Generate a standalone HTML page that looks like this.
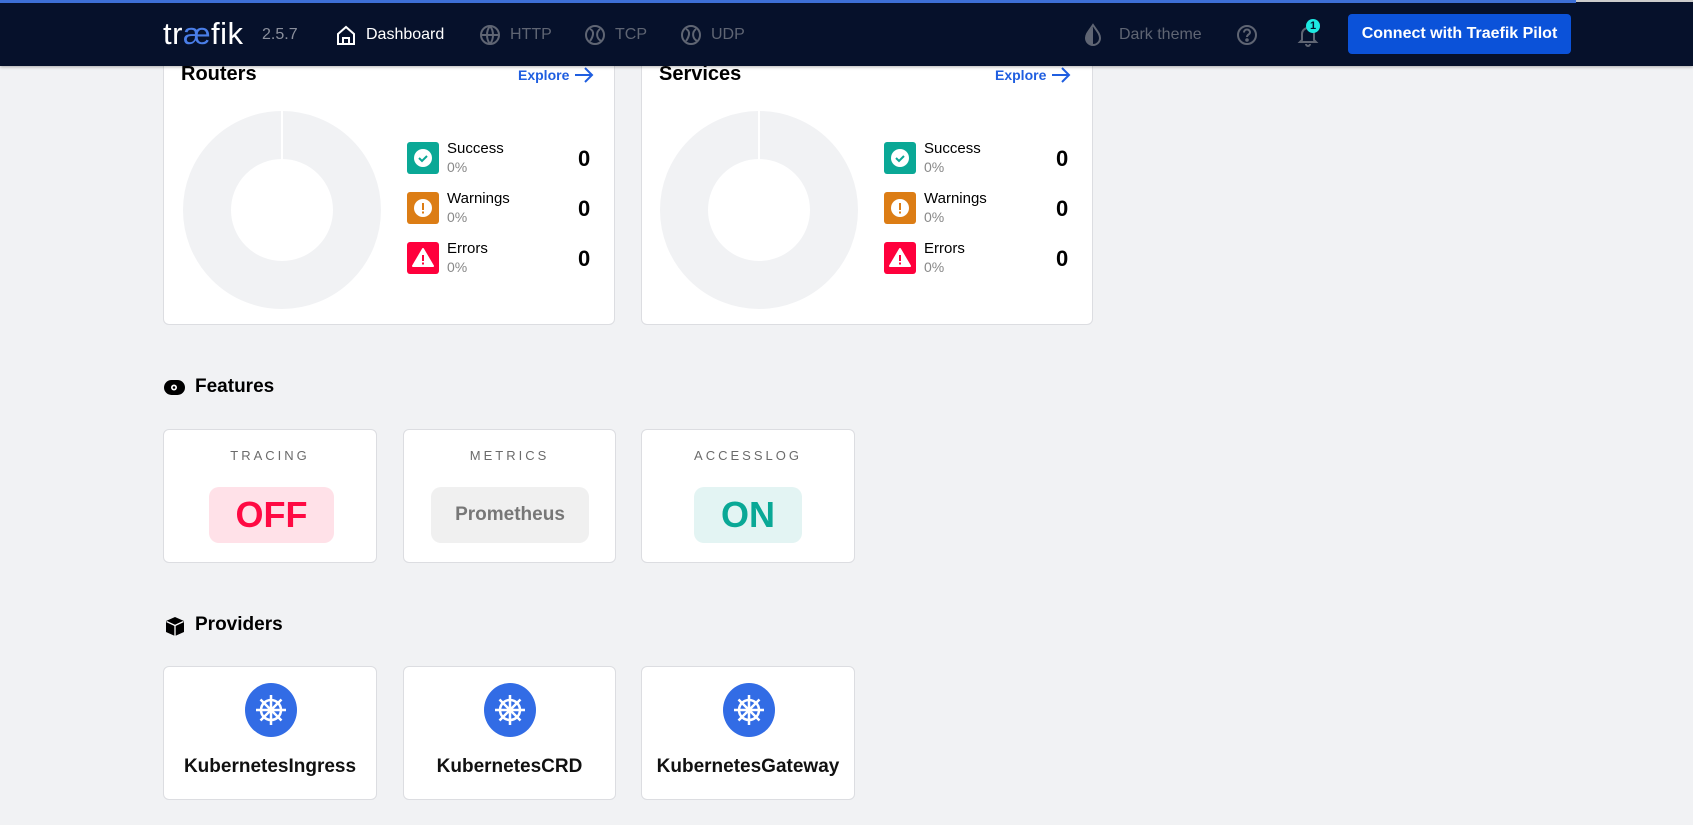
<!DOCTYPE html>
<html><head><meta charset="utf-8"><style>
*{box-sizing:border-box;margin:0;padding:0}
body{width:1693px;height:825px;overflow:hidden;background:#f1f2f4;font-family:"Liberation Sans",sans-serif;position:relative;color:#000}
.nav{position:absolute;left:0;top:0;width:1693px;height:66px;background:#06112b;box-shadow:0 1px 3px rgba(0,0,0,.3);z-index:5}
.topline{position:absolute;left:0;top:0;width:1576px;height:3px;background:#3d6fd6}
.topline2{position:absolute;left:1576px;top:0;width:117px;height:2px;background:#ccc}
.abs{position:absolute}
.navt{position:absolute;top:26px;font-size:16px;color:#5f6573}
.card{position:absolute;background:#fff;border:1px solid #dcdde1;border-radius:6px}
.title{position:absolute;font-size:20px;font-weight:bold}
.explore{position:absolute;font-size:14px;font-weight:bold;color:#1f5ee0}
.lg{position:absolute;width:32px;height:32px;border-radius:3px}
.lbl{position:absolute;font-size:15px}
.pct{position:absolute;font-size:14px;color:#888}
.cnt{position:absolute;font-size:22px;font-weight:bold}
.ft{position:absolute;left:0;width:100%;text-align:center;top:18px;font-size:13px;letter-spacing:3px;color:#6b6b6b}
.badge{position:absolute;top:57px;height:56px;border-radius:10px;text-align:center;line-height:56px}
.pname{position:absolute;left:0;width:100%;text-align:center;top:89px;font-size:19px;font-weight:bold;color:#111}
.h{position:absolute;font-size:19px;font-weight:bold}
</style></head><body>
<div class="nav">
<div class="topline"></div><div class="topline2"></div>
<div class="abs" style="left:163px;top:16px;font-size:31px;color:#fff;letter-spacing:0.5px">tr<span style="color:#4a7ee8">æ</span>fik</div>
<div class="navt" style="left:262px;color:#8a8f9c">2.5.7</div>
<svg class="abs" style="left:335px;top:24px" width="22" height="22" viewBox="0 0 22 22" fill="none" stroke="#fff" stroke-width="2"><path d="M3 10L11 3l8 7v10H3z"/><path d="M8 20v-6h6v6"/></svg>
<div class="navt" style="left:366px;color:#fff">Dashboard</div>
<svg class="abs" style="left:479px;top:24px" width="22" height="22" viewBox="0 0 22 22" fill="none" stroke="#5f6573" stroke-width="2"><circle cx="11" cy="11" r="9"/><path d="M2 11h18M11 2c-4 5-4 13 0 18M11 2c4 5 4 13 0 18"/></svg>
<div class="navt" style="left:510px">HTTP</div>
<svg class="abs" style="left:584px;top:24px" width="22" height="22" viewBox="0 0 22 22" fill="none" stroke="#5f6573" stroke-width="2"><circle cx="11" cy="11" r="9"/><path d="M6 5c5 2 3 8 0 12M16 5c-4 3-4 9 1 12"/></svg>
<div class="navt" style="left:615px">TCP</div>
<svg class="abs" style="left:680px;top:24px" width="22" height="22" viewBox="0 0 22 22" fill="none" stroke="#5f6573" stroke-width="2"><circle cx="11" cy="11" r="9"/><path d="M6 5c5 2 3 8 0 12M16 5c-4 3-4 9 1 12"/></svg>
<div class="navt" style="left:711px">UDP</div>
<svg class="abs" style="left:1083px;top:23px" width="20" height="24" viewBox="0 0 20 24"><path d="M10 2C6 8 3 11 3 15a7 7 0 0014 0c0-4-3-7-7-13z" fill="none" stroke="#5f6573" stroke-width="2"/><path d="M10 4C6 9 3 12 3 15a7 7 0 007 7z" fill="#5f6573"/></svg>
<div class="navt" style="left:1119px">Dark theme</div>
<svg class="abs" style="left:1236px;top:24px" width="22" height="22" viewBox="0 0 22 22" fill="none" stroke="#5f6573" stroke-width="2"><circle cx="11" cy="11" r="9"/><path d="M8 8.5a3 3 0 116 0c0 2-3 2-3 4.5"/><circle cx="11" cy="16" r=".8" fill="#5f6573"/></svg>
<svg class="abs" style="left:1297px;top:23px" width="22" height="24" viewBox="0 0 22 24" fill="none" stroke="#5f6573" stroke-width="2"><path d="M5 17V11a6 6 0 0112 0v6l2 2H3z"/><path d="M9 21a2 2 0 004 0"/></svg>
<div class="abs" style="left:1306px;top:19px;width:14px;height:14px;border-radius:50%;background:#1de9e2;color:#06112b;font-size:11px;font-weight:bold;text-align:center;line-height:14px">1</div>
<div class="abs" style="left:1348px;top:14px;width:223px;height:40px;background:#0b52d9;border-radius:4px;color:#fff;font-size:16px;font-weight:bold;text-align:center;line-height:40px">Connect with Traefik Pilot</div>
</div>

<!-- Routers -->
<div class="card" style="left:163px;top:30px;width:452px;height:295px">
<div class="title" style="left:17px;top:32px">Routers</div>
<div class="explore" style="left:354px;top:36px">Explore</div>
<svg class="abs" style="left:410px;top:35px" width="20" height="18" viewBox="0 0 20 18" fill="none" stroke="#1f5ee0" stroke-width="2"><path d="M1 9h17M11 2l7 7-7 7"/></svg>
<svg class="abs" style="left:18px;top:79px" width="200" height="200"><circle cx="100" cy="100" r="75" fill="none" stroke="#f1f2f4" stroke-width="48"/><rect x="99" y="0" width="2" height="50" fill="#fff"/></svg>
<div class="lg" style="left:243px;top:111px;background:#0aa896"><svg width="32" height="32"><circle cx="16" cy="16" r="9" fill="#fff"/><path d="M12 16l3 3 5-5" fill="none" stroke="#0aa896" stroke-width="2"/></svg></div>
<div class="lbl" style="left:283px;top:109px">Success</div><div class="pct" style="left:283px;top:128px">0%</div><div class="cnt" style="left:414px;top:115px">0</div>
<div class="lg" style="left:243px;top:161px;background:#dc7d15"><svg width="32" height="32"><circle cx="16" cy="16" r="9" fill="#fff"/><rect x="15" y="11" width="2" height="7" fill="#dc7d15"/><rect x="15" y="19.5" width="2" height="2" fill="#dc7d15"/></svg></div>
<div class="lbl" style="left:283px;top:159px">Warnings</div><div class="pct" style="left:283px;top:178px">0%</div><div class="cnt" style="left:414px;top:165px">0</div>
<div class="lg" style="left:243px;top:211px;background:#ff003c"><svg width="32" height="32"><path d="M16 7l10 17H6z" fill="#fff" stroke="#fff" stroke-linejoin="round" stroke-width="2"/><rect x="15" y="13" width="2" height="6" fill="#ff003c"/><rect x="15" y="20.5" width="2" height="2" fill="#ff003c"/></svg></div>
<div class="lbl" style="left:283px;top:209px">Errors</div><div class="pct" style="left:283px;top:228px">0%</div><div class="cnt" style="left:414px;top:215px">0</div>
</div>

<!-- Services -->
<div class="card" style="left:641px;top:30px;width:452px;height:295px">
<div class="title" style="left:17px;top:32px">Services</div>
<div class="explore" style="left:353px;top:36px">Explore</div>
<svg class="abs" style="left:409px;top:35px" width="20" height="18" viewBox="0 0 20 18" fill="none" stroke="#1f5ee0" stroke-width="2"><path d="M1 9h17M11 2l7 7-7 7"/></svg>
<svg class="abs" style="left:17px;top:79px" width="200" height="200"><circle cx="100" cy="100" r="75" fill="none" stroke="#f1f2f4" stroke-width="48"/><rect x="99" y="0" width="2" height="50" fill="#fff"/></svg>
<div class="lg" style="left:242px;top:111px;background:#0aa896"><svg width="32" height="32"><circle cx="16" cy="16" r="9" fill="#fff"/><path d="M12 16l3 3 5-5" fill="none" stroke="#0aa896" stroke-width="2"/></svg></div>
<div class="lbl" style="left:282px;top:109px">Success</div><div class="pct" style="left:282px;top:128px">0%</div><div class="cnt" style="left:414px;top:115px">0</div>
<div class="lg" style="left:242px;top:161px;background:#dc7d15"><svg width="32" height="32"><circle cx="16" cy="16" r="9" fill="#fff"/><rect x="15" y="11" width="2" height="7" fill="#dc7d15"/><rect x="15" y="19.5" width="2" height="2" fill="#dc7d15"/></svg></div>
<div class="lbl" style="left:282px;top:159px">Warnings</div><div class="pct" style="left:282px;top:178px">0%</div><div class="cnt" style="left:414px;top:165px">0</div>
<div class="lg" style="left:242px;top:211px;background:#ff003c"><svg width="32" height="32"><path d="M16 7l10 17H6z" fill="#fff" stroke="#fff" stroke-linejoin="round" stroke-width="2"/><rect x="15" y="13" width="2" height="6" fill="#ff003c"/><rect x="15" y="20.5" width="2" height="2" fill="#ff003c"/></svg></div>
<div class="lbl" style="left:282px;top:209px">Errors</div><div class="pct" style="left:282px;top:228px">0%</div><div class="cnt" style="left:414px;top:215px">0</div>
</div>

<!-- Features -->
<svg class="abs" style="left:164px;top:380px" width="21" height="15"><rect x="0" y="0" width="21" height="15" rx="7.5" fill="#000"/><circle cx="10" cy="7.5" r="3" fill="#fff"/><circle cx="10" cy="7.5" r="1.3" fill="#000"/></svg>
<div class="h" style="left:195px;top:376px">Features</div>
<div class="card" style="left:163px;top:429px;width:214px;height:134px"><div class="ft">TRACING</div><div class="badge" style="left:45px;width:125px;background:#ffe1e8;color:#ff0a43;font-size:36px;font-weight:bold">OFF</div></div>
<div class="card" style="left:403px;top:429px;width:213px;height:134px"><div class="ft">METRICS</div><div class="badge" style="left:27px;width:158px;background:#f0f0f0;color:#777;font-size:19px;font-weight:bold">Prometheus</div></div>
<div class="card" style="left:641px;top:429px;width:214px;height:134px"><div class="ft">ACCESSLOG</div><div class="badge" style="left:52px;width:108px;background:#e3f4f3;color:#0aa896;font-size:36px;font-weight:bold">ON</div></div>

<!-- Providers -->
<svg class="abs" style="left:165px;top:616px" width="20" height="21" viewBox="0 0 20 21"><path d="M10 1L19 5v11l-9 4-9-4V5z" fill="#000"/><path d="M1.5 5.5L10 9.5l8.5-4M10 9.5V20" stroke="#fff" stroke-width="1.3" fill="none"/></svg>
<div class="h" style="left:195px;top:614px">Providers</div>

<div class="card" style="left:163px;top:666px;width:214px;height:134px">
<svg class="abs" style="left:81px;top:16px" width="52" height="54" viewBox="0 0 52 54"><ellipse cx="26" cy="27" rx="26" ry="27" fill="#326ce5"/><g stroke="#fff" stroke-width="2.5" fill="none"><circle cx="26" cy="27" r="10"/><path d="M26 12v30M11 27h30M15.5 16.5l21 21M36.5 16.5l-21 21"/></g><circle cx="26" cy="27" r="3" fill="#fff"/></svg>
<div class="pname">KubernetesIngress</div></div>
<div class="card" style="left:403px;top:666px;width:213px;height:134px">
<svg class="abs" style="left:80px;top:16px" width="52" height="54" viewBox="0 0 52 54"><ellipse cx="26" cy="27" rx="26" ry="27" fill="#326ce5"/><g stroke="#fff" stroke-width="2.5" fill="none"><circle cx="26" cy="27" r="10"/><path d="M26 12v30M11 27h30M15.5 16.5l21 21M36.5 16.5l-21 21"/></g><circle cx="26" cy="27" r="3" fill="#fff"/></svg>
<div class="pname">KubernetesCRD</div></div>
<div class="card" style="left:641px;top:666px;width:214px;height:134px">
<svg class="abs" style="left:81px;top:16px" width="52" height="54" viewBox="0 0 52 54"><ellipse cx="26" cy="27" rx="26" ry="27" fill="#326ce5"/><g stroke="#fff" stroke-width="2.5" fill="none"><circle cx="26" cy="27" r="10"/><path d="M26 12v30M11 27h30M15.5 16.5l21 21M36.5 16.5l-21 21"/></g><circle cx="26" cy="27" r="3" fill="#fff"/></svg>
<div class="pname">KubernetesGateway</div></div>
</body></html>
